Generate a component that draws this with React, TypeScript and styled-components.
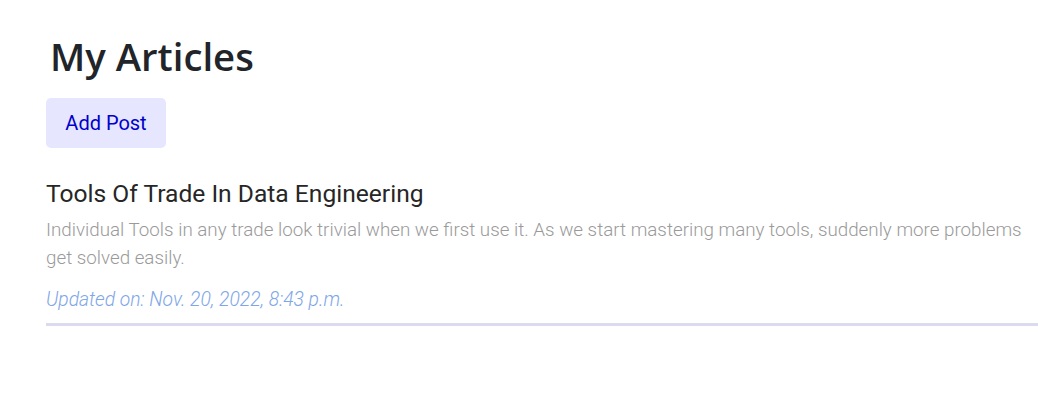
import React from "react";
import styled, { createGlobalStyle } from "styled-components";

const Global = createGlobalStyle`
  html, body { margin: 0; padding: 0; background: #ffffff; }
  body { font-family: Roboto, "Liberation Sans", sans-serif; }
`;

const Page = styled.main`
  padding: 0 0 0 46px;
`;

const Heading = styled.h1`
  margin: 0;
  padding: 28px 0 0 4px;
  font-family: "Open Sans", "Noto Sans", sans-serif;
  font-weight: 600;
  font-size: 38.3px;
  line-height: 56px;
  color: #212529;
`;

const AddButton = styled.button`
  display: block;
  margin-top: 14px;
  width: 120px;
  height: 50px;
  border: none;
  border-radius: 5px;
  background: #e6e6fe;
  color: #0000cd;
  font-family: Roboto, sans-serif;
  font-size: 20px;
  font-weight: 400;
  padding: 0;
`;

const Article = styled.article`
  margin-top: 30px;
  border-bottom: 3px solid #dcdaf0;
  padding-bottom: 11px;
`;

const ArticleTitle = styled.h2`
  margin: 0;
  font-family: Roboto, sans-serif;
  font-weight: 400;
  font-size: 24.6px;
  line-height: 32px;
  color: #262626;
`;

const Summary = styled.p`
  margin: 6px 0 0;
  font-family: Roboto, sans-serif;
  font-weight: 300;
  font-size: 18.8px;
  line-height: 28px;
  color: #9a9a9a;
`;

const Updated = styled.p`
  margin: 16px 0 0;
  font-family: Roboto, sans-serif;
  font-style: italic;
  font-weight: 300;
  font-size: 19.3px;
  line-height: 24px;
  color: #7ea6e8;
`;

export default function App() {
  return (
    <>
      <Global />
      <Page>
        <Heading>My Articles</Heading>
        <AddButton>Add Post</AddButton>
        <Article>
          <ArticleTitle>Tools Of Trade In Data Engineering</ArticleTitle>
          <Summary>
            Individual Tools in any trade look trivial when we first use it. As we start mastering many tools, suddenly more problems get solved easily.
          </Summary>
          <Updated>Updated on: Nov. 20, 2022, 8:43 p.m.</Updated>
        </Article>
      </Page>
    </>
  );
}
